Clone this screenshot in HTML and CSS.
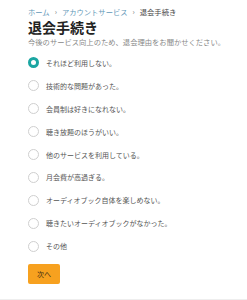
FILE: index.html
```html
<!DOCTYPE html>
<html lang="ja">
<head>
<meta charset="utf-8">
<link rel="stylesheet" href="styles.css">
</head>
<body>
<div class="page">
  <nav class="breadcrumb">
    <a class="crumb-link">ホーム</a><span class="sep">›</span><a class="crumb-link">アカウントサービス</a><span class="sep">›</span><span class="crumb-current">退会手続き</span>
  </nav>
  <h1 class="title">退会手続き</h1>
  <p class="subtitle">今後のサービス向上のため、退会理由をお聞かせください。</p>
  <ul class="options">
    <li class="option"><span class="radio checked"></span><span class="label">それほど利用しない。</span></li>
    <li class="option"><span class="radio"></span><span class="label">技術的な問題があった。</span></li>
    <li class="option"><span class="radio"></span><span class="label">会員制は好きになれない。</span></li>
    <li class="option"><span class="radio"></span><span class="label">聴き放題のほうがいい。</span></li>
    <li class="option"><span class="radio"></span><span class="label">他のサービスを利用している。</span></li>
    <li class="option"><span class="radio"></span><span class="label">月会費が高過ぎる。</span></li>
    <li class="option"><span class="radio"></span><span class="label">オーディオブック自体を楽しめない。</span></li>
    <li class="option"><span class="radio"></span><span class="label">聴きたいオーディオブックがなかった。</span></li>
    <li class="option"><span class="radio"></span><span class="label">その他</span></li>
  </ul>
  <button class="next">次へ</button>
</div>
</body>
</html>
```
FILE: styles.css
```css
html, body {
  margin: 0;
  padding: 0;
  background: #fff;
}
body {
  font-family: "Noto Sans CJK JP", "Noto Sans", sans-serif;
  color: #333;
  height: 300px;
  box-sizing: border-box;
  border-bottom: 1px solid #eee;
}
.page {
  padding: 6px 0 0 28px;
}
.breadcrumb {
  font-size: 7.3px;
  line-height: 12px;
  white-space: nowrap;
}
.crumb-link {
  color: #5f98b8;
}
.sep {
  color: #777;
  margin: 0 5px;
}
.crumb-current {
  color: #444;
}
.title {
  margin: 0;
  font-size: 14px;
  line-height: 18px;
  font-weight: bold;
  color: #222;
}
.subtitle {
  margin: 0;
  font-size: 7.3px;
  line-height: 12px;
  color: #888;
  white-space: nowrap;
}
.options {
  list-style: none;
  margin: 3.5px 0 0;
  padding: 0;
}
.option {
  display: flex;
  align-items: center;
  height: 22.9px;
  gap: 7px;
}
.radio {
  width: 11px;
  height: 11px;
  box-sizing: border-box;
  border: 1px solid #cfcfcf;
  border-radius: 50%;
  background: #fff;
  flex: none;
}
.radio.checked {
  border: 3.5px solid #1ba6a2;
}
.label {
  font-size: 7px;
  color: #555;
  white-space: nowrap;
}
.next {
  margin-top: 4.5px;
  width: 32px;
  height: 20px;
  border: none;
  border-radius: 2px;
  background: #f7a11f;
  color: #3a2a10;
  font-family: "Noto Sans CJK JP", sans-serif;
  font-size: 7px;
  padding: 0;
}
```
